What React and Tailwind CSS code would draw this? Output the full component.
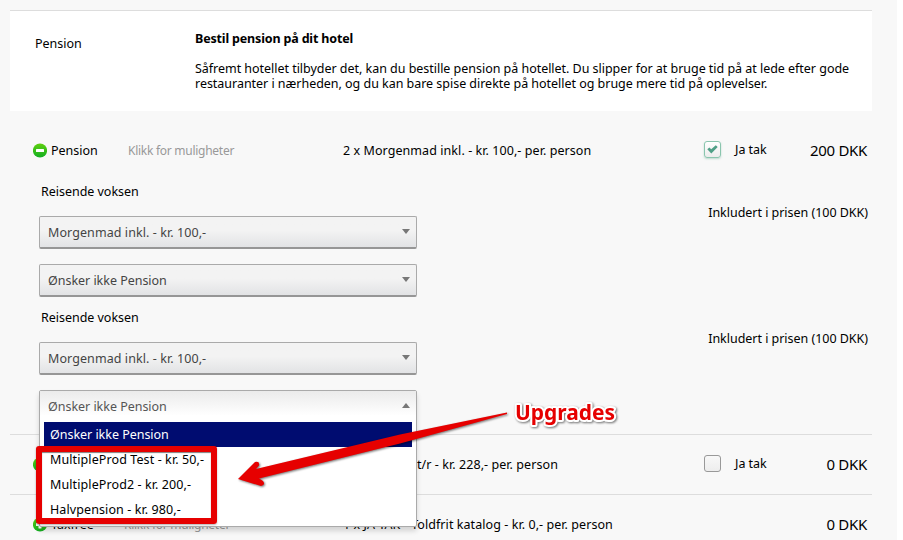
function StatusIcon({ plus }) {
  return (
    <svg width="14" height="15" viewBox="0 0 14 15" className="shrink-0">
      <defs>
        <linearGradient id="green" x1="0" y1="0" x2="0" y2="1">
          <stop offset="0" stopColor="#5fd00f" />
          <stop offset="1" stopColor="#12ae22" />
        </linearGradient>
      </defs>
      <circle cx="7" cy="7.5" r="7.1" fill="url(#green)" />
      <rect x="3" y="6" width="8" height="3" rx="0.5" fill="#fff" />
      {plus && <rect x="5.5" y="3.5" width="3" height="8" rx="0.5" fill="#fff" />}
    </svg>
  );
}

function Caret({ up }) {
  return (
    <svg width="8" height="5" viewBox="0 0 8 5" className="shrink-0">
      <path d={up ? "M0 5L4 0L8 5Z" : "M0 0H8L4 5Z"} fill="#777" />
    </svg>
  );
}

function Select({ children }) {
  return (
    <div className="flex h-[33px] w-[378px] justify-between rounded-[2px] border border-[#aaa] border-b-2 border-b-[#969696] bg-linear-to-b from-[#f3f3f3] from-45% to-[#e2e3e5] pr-[6px] pl-[8px] text-[#444]">
      <span className="pt-[7px]">{children}</span>
      <span className="flex pt-[12px]"><Caret /></span>
    </div>
  );
}

function Checkbox({ checked }) {
  return (
    <div className={checked
      ? "mb-[2px] flex size-[17px] items-center justify-center rounded-[3px] border border-[#8ac5ae] bg-linear-to-b from-white to-[#ececec] shadow-[0_1px_2px_rgba(80,160,130,0.35)]"
      : "mb-[2px] size-[17px] rounded-[3px] border border-[#999] bg-linear-to-b from-[#f8f8f8] to-[#ededed]"}>
      {checked && (
        <svg width="11" height="9" viewBox="0 0 11 9"><path d="M0.3 4.2L2.4 2.6L4.2 4.3L8.8 0.2L10.7 1.9L4.3 8.6Z" fill="#4f9f86" /></svg>
      )}
    </div>
  );
}

function Row({ name, plus, hint, hintClass = "pl-[10px]", desc, descClass = "", price, checkbox, checked }) {
  return (
    <div className="flex h-[59px] items-center">
      <div className="flex w-[108px] items-center gap-[4px] pl-[23px]">
        <StatusIcon plus={plus} />
        <span>{name}</span>
      </div>
      <span className={`w-[225px] text-[12px] tracking-[-0.27px] text-[#999] ${hintClass}`}>{hint}</span>
      <span className={`w-[361px] tracking-[0.07px] whitespace-pre ${descClass}`}>{desc}</span>
      <div className="flex w-[90px] items-center gap-[14px]">
        {checkbox && <Checkbox checked={checked} />}
        {checkbox && <span className="pb-[2px]">Ja tak</span>}
      </div>
      <span className="flex-1 pr-[5px] pb-[2px] text-right text-[15px] tracking-[-0.3px]">{price}</span>
    </div>
  );
}

function Traveller({ children }) {
  return (
    <div className="flex h-[126px] justify-between pr-[4px] pl-[29px]">
      <div>
        <div className="h-[36px] pt-[3px] pl-[2px]">Reisende voksen</div>
        <div className="flex flex-col gap-[15px]">{children}</div>
      </div>
      <span className="pt-[24px]">Inkludert i prisen (100 DKK)</span>
    </div>
  );
}

function OpenSelect() {
  return (
    <div className="relative z-10 h-[33px] w-[378px]">
      <div className="absolute top-0 left-0 h-[137px] w-[378px] rounded-[2px] border border-[#aaa] bg-white px-[4px] shadow-[0_4px_5px_rgba(0,0,0,0.15)]">
        <div className="-mx-[4px] flex h-[31px] justify-between bg-linear-to-b from-[#ebebeb] to-white to-80% pr-[6px] pl-[8px] text-[#555]">
          <span className="pt-[7px]">Ønsker ikke Pension</span>
          <span className="flex pt-[12px]"><Caret up /></span>
        </div>
        <div className="h-[25px] bg-[#000c70] pt-[4px] pl-[6px] text-white">Ønsker ikke Pension</div>
        <div className="h-[25px] pt-[4px] pl-[6px] tracking-[0.1px]">MultipleProd Test - kr. 50,-</div>
        <div className="h-[25px] pt-[4px] pl-[6px] tracking-[0.1px]">MultipleProd2 - kr. 200,-</div>
        <div className="h-[25px] pt-[4px] pl-[6px] tracking-[0.1px]">Halvpension - kr. 980,-</div>
      </div>
    </div>
  );
}

function Annotations() {
  return (
    <>
      <div className="absolute top-[446px] left-[36px] z-20 h-[78px] w-[181px] rounded-[3px] border-6 border-[#e60000] shadow-[inset_0_1px_1px_rgba(0,0,0,0.5),0_1px_2px_rgba(0,0,0,0.3)]" />
      <svg className="absolute top-[400px] left-[230px] z-20 drop-shadow-[1px_1px_1px_rgba(0,0,0,0.55)]" width="290" height="100" viewBox="230 400 290 100">
        <path d="M507 412.400L400 434.500L256 469L259 465.500Q260 461 255 462L238 479L261 486Q266 485 263 481L259 478.500L400 443.500L507 414Z" fill="#e60000" />
      </svg>
      <svg className="absolute top-[395px] left-[508px] z-20 drop-shadow-[1px_1px_1px_rgba(0,0,0,0.55)]" width="120" height="40">
        <text x="7" y="25" fontFamily="Noto Sans, sans-serif" fontWeight="700" fontSize="20.5" textLength="100" lengthAdjust="spacingAndGlyphs" letterSpacing="0" fill="#e60000" stroke="#fff" strokeWidth="4" strokeLinejoin="round" paintOrder="stroke">Upgrades</text>
      </svg>
    </>
  );
}

export default function App() {
  return (
    <div className="relative h-[540px] w-[903px] overflow-hidden bg-white font-['Noto_Sans',sans-serif] text-[12.5px] leading-[18px] tracking-[-0.03px] text-black">
      <main className="h-full w-[897px] bg-[#f8f8f8] pt-[10px] pl-[10px]">
        <div className="w-[862px]">
          <section className="flex h-[101px] border-t border-[#ddd] bg-white">
            <div className="w-[185px] pt-[24px] pl-[25px]">Pension</div>
            <div className="flex-1 pt-[19px] whitespace-nowrap">
              <div className="font-bold tracking-[-0.16px]">Bestil pension på dit hotel</div>
              <p className="pt-[13px] leading-[15px]">
                Såfremt hotellet tilbyder det, kan du bestille pension på hotellet. Du slipper for at bruge tid på at lede efter gode<br />
                restauranter i nærheden, og du kan bare spise direkte på hotellet og bruge mere tid på oplevelser.
              </p>
            </div>
          </section>
          <section className="h-[323px] pt-[10px]">
            <Row name="Pension" hint="Klikk for muligheter" desc="2 x Morgenmad inkl. - kr. 100,- per. person" price="200 DKK" checkbox checked />
            <Traveller>
              <Select><span className="tracking-[0.08px]">Morgenmad inkl. - kr. 100,-</span></Select>
              <Select>Ønsker ikke Pension</Select>
            </Traveller>
            <Traveller>
              <Select><span className="tracking-[0.08px]">Morgenmad inkl. - kr. 100,-</span></Select>
              <OpenSelect />
            </Traveller>
          </section>
          <section className="border-t border-[#ddd]">
            <Row plus desc="t/r - kr. 228,- per. person" descClass="pl-[74px]" price="0 DKK" checkbox />
          </section>
          <section className="border-t border-[#ddd]">
            <Row name="Taxfree" plus hint="Klikk for muligheter" hintClass="pl-[6px]" desc="1 x JA TAK - Toldfrit katalog - kr. 0,- per. person" price="0 DKK" />
          </section>
        </div>
      </main>
      <Annotations />
    </div>
  );
}
